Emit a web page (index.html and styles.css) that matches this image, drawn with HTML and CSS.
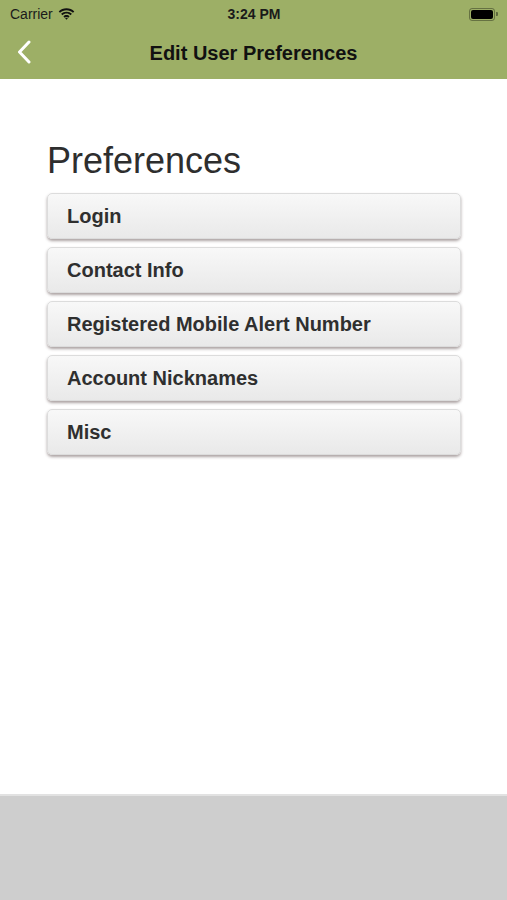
FILE: index.html
```html
<!DOCTYPE html>
<html lang="en">
<head>
    <meta charset="UTF-8">
    <meta name="viewport" content="width=device-width, initial-scale=1.0">
    <title>Edit User Preferences</title>
    <link rel="stylesheet" href="styles.css">
</head>
<body>
    <div class="app">
        <!-- Status bar + nav bar share the green header -->
        <header class="topbar">
            <div class="status">
                <div class="status-left">
                    <span>Carrier</span>
                    <svg class="wifi" width="17" height="12" viewBox="0 0 17 12">
                        <path d="M8.5 2.2c2.5 0 4.8 1 6.5 2.6l1.3-1.4C14.3 1.5 11.5.3 8.5.3S2.7 1.5.7 3.4L2 4.8C3.7 3.2 6 2.2 8.5 2.2z" fill="#111"/>
                        <path d="M8.5 5.6c1.6 0 3 .6 4.1 1.6l1.3-1.4C12.5 4.5 10.6 3.7 8.5 3.7S4.5 4.5 3.1 5.8l1.3 1.4c1.1-1 2.5-1.6 4.1-1.6z" fill="#111"/>
                        <path d="M8.5 9c.7 0 1.3.3 1.8.7l1.3-1.4C10.8 7.5 9.7 7 8.5 7s-2.3.5-3.1 1.3l1.3 1.4c.5-.4 1.1-.7 1.8-.7zM8.5 11.8l1.4-1.5c-.4-.3-.9-.5-1.4-.5s-1 .2-1.4.5z" fill="#111"/>
                    </svg>
                </div>
                <div class="status-time">3:24 PM</div>
                <div class="status-right">
                    <div class="battery"><div class="battery-fill"></div></div>
                    <div class="battery-cap"></div>
                </div>
            </div>
            <nav class="navbar">
                <svg class="back" width="14" height="24" viewBox="0 0 14 24">
                    <path d="M12 2L2.5 12 12 22" fill="none" stroke="#fff" stroke-width="3" stroke-linecap="round" stroke-linejoin="round"/>
                </svg>
                <h1>Edit User Preferences</h1>
            </nav>
        </header>

        <main class="content">
            <h2>Preferences</h2>
            <ul class="pref-list">
                <li class="pref-btn">Login</li>
                <li class="pref-btn">Contact Info</li>
                <li class="pref-btn">Registered Mobile Alert Number</li>
                <li class="pref-btn">Account Nicknames</li>
                <li class="pref-btn">Misc</li>
            </ul>
        </main>

        <footer class="bottom"></footer>
    </div>
</body>
</html>
```

FILE: styles.css
```css
body {
    margin: 0;
    font-family: "Liberation Sans", Arial, sans-serif;
    background-color: #fff;
}

.app {
    display: flex;
    flex-direction: column;
    height: 900px;
}

.topbar {
    background-color: #9daf66;
    height: 79px;
}

.status {
    display: flex;
    align-items: center;
    justify-content: space-between;
    height: 28px;
    padding: 0 9px 0 10px;
    font-size: 14px;
    color: #1a1a1a;
}

.status-left {
    display: flex;
    align-items: center;
    gap: 5px;
    width: 110px;
}

.status-time {
    font-weight: bold;
    font-size: 14px;
}

.status-right {
    display: flex;
    align-items: center;
    justify-content: flex-end;
    width: 110px;
}

.battery {
    width: 22px;
    height: 9px;
    border: 1px solid rgba(0, 0, 0, 0.35);
    border-radius: 3px;
    padding: 1px;
}

.battery-fill {
    width: 100%;
    height: 100%;
    background-color: #000;
    border-radius: 2px;
}

.battery-cap {
    width: 2px;
    height: 4px;
    margin-left: 1px;
    background-color: rgba(0, 0, 0, 0.4);
    border-radius: 0 1px 1px 0;
}

.navbar {
    position: relative;
    height: 51px;
    display: flex;
    align-items: center;
    justify-content: center;
}

.navbar h1 {
    margin: 0;
    font-size: 20px;
    font-weight: bold;
    color: #111;
}

.back {
    position: absolute;
    left: 17px;
    top: 12px;
}

.content {
    flex: 1;
    padding: 0 46px 0 47px;
}

.content h2 {
    margin: 61px 0 12px;
    font-size: 36px;
    font-weight: normal;
    color: #2e2e2e;
    line-height: 41px;
}

.pref-list {
    list-style: none;
    margin: 0;
    padding: 0;
    display: flex;
    flex-direction: column;
    gap: 8px;
}

.pref-btn {
    height: 44px;
    line-height: 44px;
    padding-left: 19px;
    font-size: 20px;
    font-weight: bold;
    color: #2f2f2f;
    border: 1px solid #dcdcdc;
    border-radius: 5px;
    background: linear-gradient(#f8f8f8, #e9e9e9);
    box-shadow: 0 2px 3px rgba(70, 50, 50, 0.45);
}

.bottom {
    height: 104px;
    background-color: #cecece;
    border-top: 2px solid #e2e2e2;
}
```
